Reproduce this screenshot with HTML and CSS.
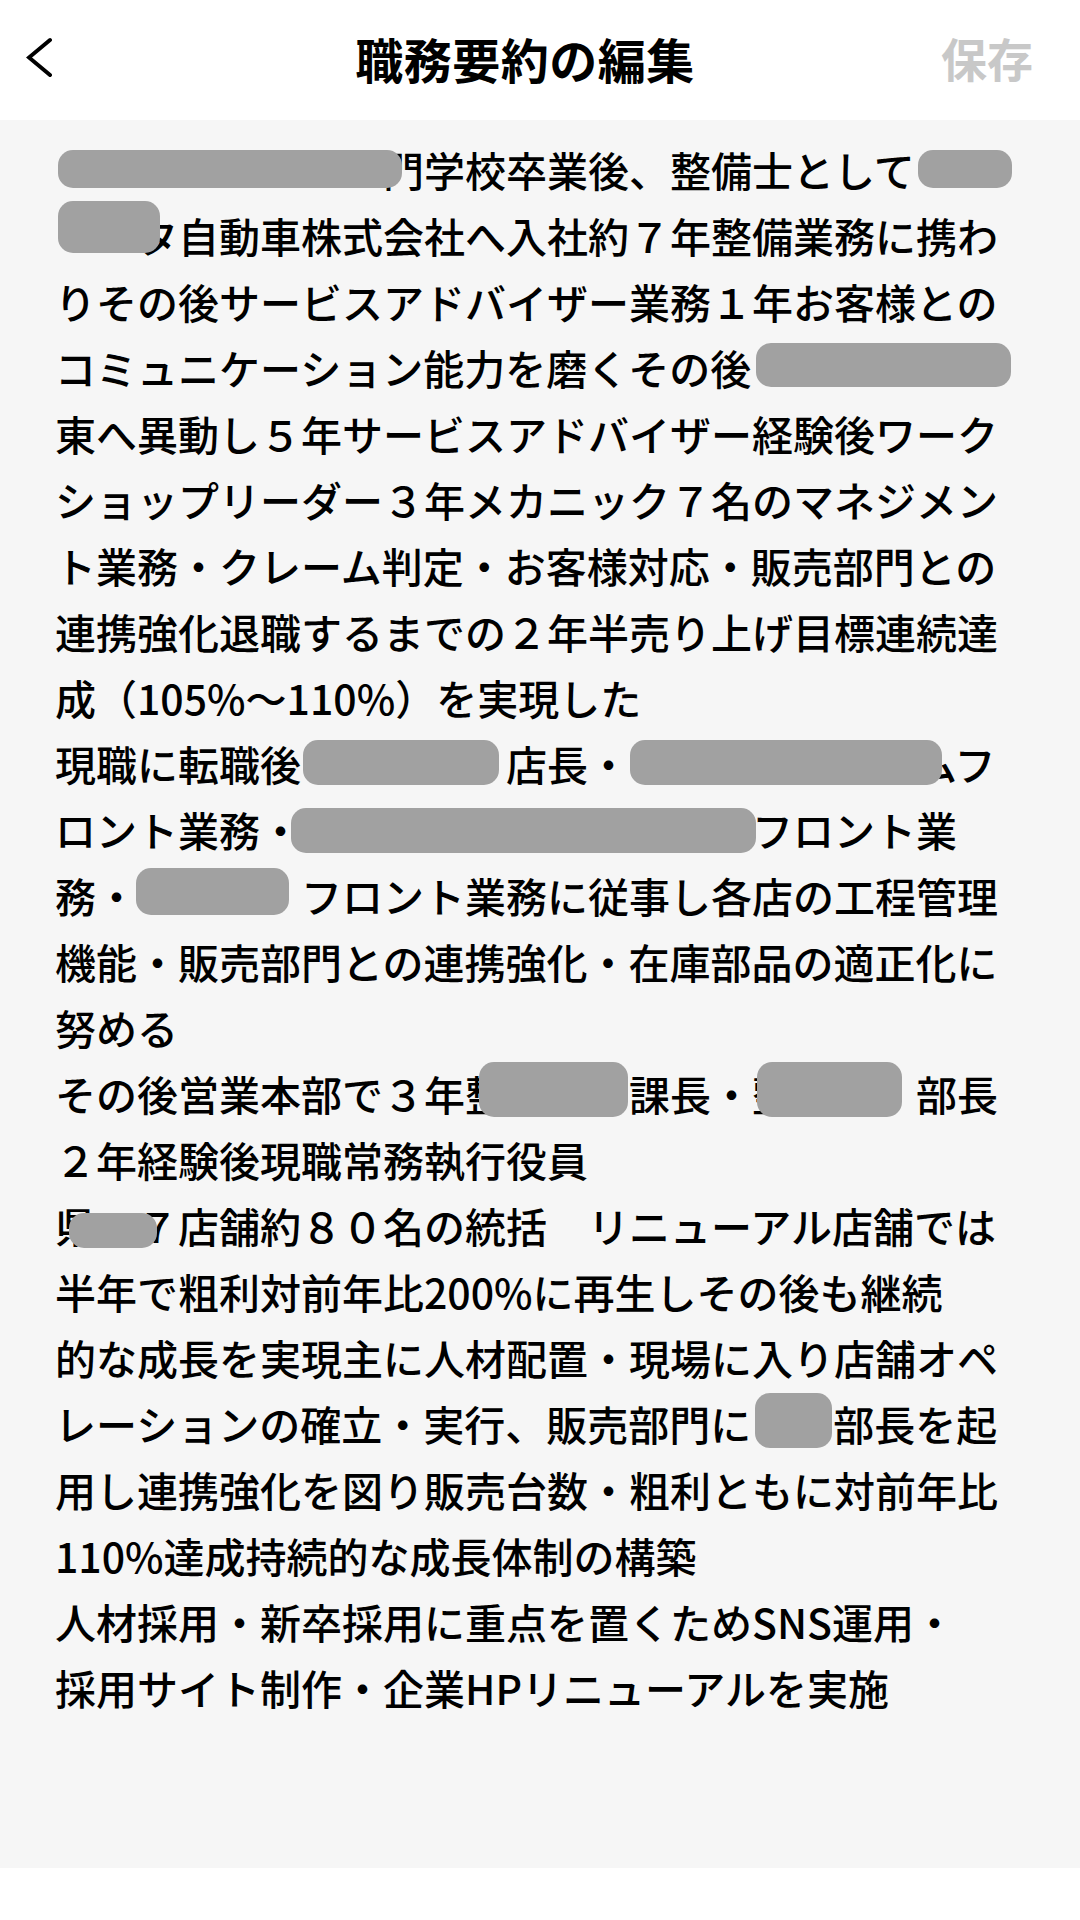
FILE: index.html
```html
<!DOCTYPE html>
<html lang="ja">
<head>
<meta charset="utf-8">
<title>職務要約の編集</title>
<link rel="stylesheet" href="styles.css">
</head>
<body>
<div class="screen">
  <header class="nav">
    <div class="nav-left">
      <svg class="back" width="28" height="42" viewBox="0 0 28 42" aria-label="戻る">
        <polyline points="24,3 3,20.5 24,38" fill="none" stroke="#000" stroke-width="4" stroke-linecap="round" stroke-linejoin="miter"/>
      </svg>
    </div>
    <h1 class="title">職務要約の編集</h1>
    <div class="nav-right"><span class="save">保存</span></div>
  </header>
  <main class="editor">
    <div class="summary">
      <div class="line"><span class="redact" style="margin-left:3px;width:344px;margin-top:14px;height:38px;margin-right:-19px"></span>門学校卒業後、整備士として<span class="redact" style="margin-left:3px;width:94px;margin-top:14px;height:38px"></span></div>
      <div class="line"><span class="redact" style="margin-left:3px;width:102px;margin-top:-1px;height:52px;margin-right:-23px"></span>タ自動車株式会社へ入社約７年整備業務に携わ</div>
      <div class="line">りその後サービスアドバイザー業務１年お客様との</div>
      <div class="line">コミュニケーション能力を磨くその後<span class="redact" style="margin-left:5px;width:255px;margin-top:9px;height:44px"></span></div>
      <div class="line">東へ異動し５年サービスアドバイザー経験後ワーク</div>
      <div class="line">ショップリーダー３年メカニック７名のマネジメン</div>
      <div class="line">ト業務・クレーム判定・お客様対応・販売部門との</div>
      <div class="line">連携強化退職するまでの２年半売り上げ目標連続達</div>
      <div class="line">成（105%〜110%）を実現した</div>
      <div class="line">現職に転職後<span class="redact" style="margin-left:2px;width:196px;margin-top:10px;height:45px;margin-right:7px"></span>店長・<span class="redact" style="margin-left:1px;width:312px;margin-top:10px;height:45px;margin-right:-26px"></span>ムフ</div>
      <div class="line">ロント業務・<span class="redact" style="margin-left:-10px;width:465px;margin-top:12px;height:45px;margin-right:-4px"></span>フロント業</div>
      <div class="line">務・<span class="redact" style="margin-left:-1px;width:153px;margin-top:6px;height:47px;margin-right:12px"></span>フロント業務に従事し各店の工程管理</div>
      <div class="line">機能・販売部門との連携強化・在庫部品の適正化に</div>
      <div class="line">努める</div>
      <div class="line">その後営業本部で３年整<span class="redact" style="margin-left:-27px;width:149px;margin-top:2px;height:55px;margin-right:1px"></span>課長・整<span class="redact" style="margin-left:-36px;width:145px;margin-top:2px;height:55px;margin-right:14px"></span>部長</div>
      <div class="line">２年経験後現職常務執行役員</div>
      <div class="line">県<span class="redact" style="margin-left:-27px;width:88px;margin-top:21px;height:35px;margin-right:-20px"></span>７店舗約８０名の統括　リニューアル店舗では</div>
      <div class="line">半年で粗利対前年比200%に再生しその後も継続</div>
      <div class="line">的な成長を実現主に人材配置・現場に入り店舗オペ</div>
      <div class="line">レーションの確立・実行、販売部門に<span class="redact" style="margin-left:4px;width:77px;margin-top:3px;height:55px;margin-right:1px"></span>部長を起</div>
      <div class="line">用し連携強化を図り販売台数・粗利ともに対前年比</div>
      <div class="line">110%達成持続的な成長体制の構築</div>
      <div class="line">人材採用・新卒採用に重点を置くためSNS運用・</div>
      <div class="line">採用サイト制作・企業HPリニューアルを実施</div>
    </div>
  </main>
  <div class="home-area"></div>
</div>
</body>
</html>
```

FILE: styles.css
```css
* {
  box-sizing: border-box;
}

html, body {
  margin: 0;
  padding: 0;
  background: #ffffff;
}

body {
  font-family: "Noto Sans CJK JP", "Noto Sans", sans-serif;
  color: #000;
}

.screen {
  width: 1080px;
  height: 1920px;
  display: flex;
  flex-direction: column;
  overflow: hidden;
}

.nav {
  height: 120px;
  flex: 0 0 120px;
  background: #ffffff;
  display: grid;
  grid-template-columns: 1fr auto 1fr;
  align-items: center;
}

.nav-left {
  padding-left: 26px;
  display: flex;
  align-items: center;
  margin-bottom: 4px;
}

.back {
  display: block;
}

.title {
  margin: 0 0 5px 0;
  padding-right: 30px;
  font-size: 48px;
  line-height: 1;
  font-weight: 700;
  letter-spacing: 0.5px;
  white-space: nowrap;
}

.nav-right {
  justify-self: end;
  padding-right: 47px;
  margin-bottom: 5px;
}

.save {
  font-size: 46px;
  line-height: 1;
  font-weight: 700;
  color: #c8c8c8;
  white-space: nowrap;
}

.editor {
  flex: 1 1 auto;
  background: #f6f6f6;
  padding: 16px 55px 0 55px;
}

.summary {
  font-size: 41px;
  font-weight: 500;
  color: #000;
}

.line {
  height: 66px;
  line-height: 66px;
  white-space: nowrap;
}

.redact {
  display: inline-block;
  vertical-align: top;
  background: #a1a1a1;
  border-radius: 15px;
  position: relative;
  z-index: 1;
}

.home-area {
  height: 52px;
  flex: 0 0 52px;
  background: #ffffff;
}
```
